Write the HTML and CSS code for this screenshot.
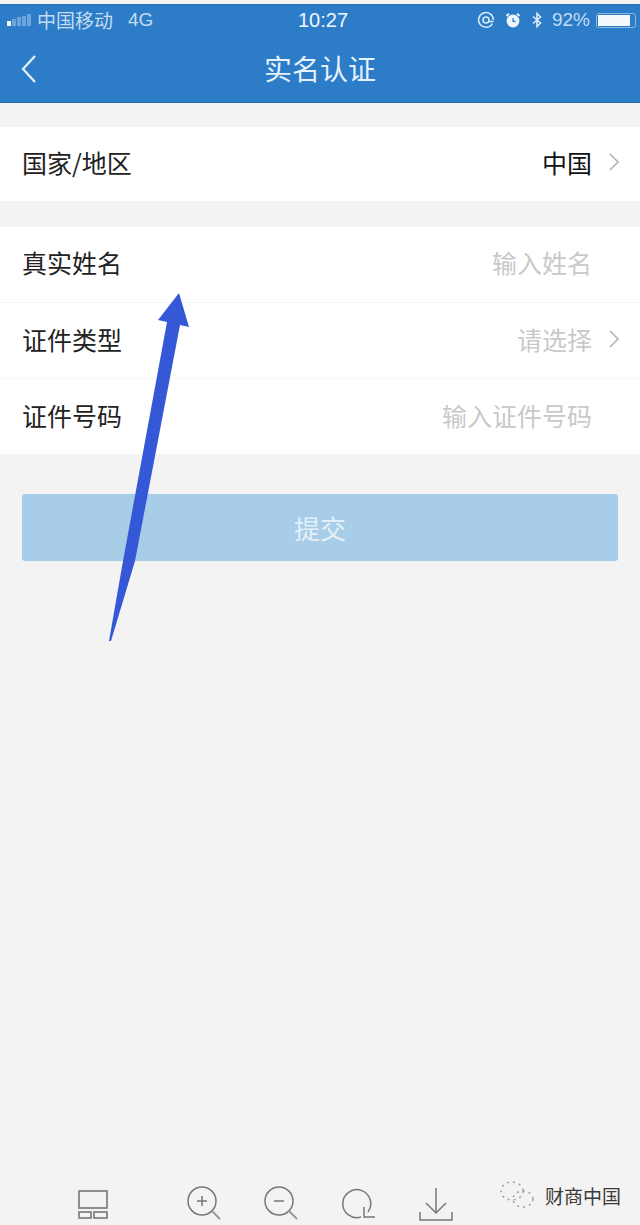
FILE: index.html
```html
<!DOCTYPE html>
<html lang="zh-CN">
<head>
    <meta charset="UTF-8">
    <meta name="viewport" content="width=device-width, initial-scale=1.0">
    <title>实名认证</title>
    <link rel="stylesheet" href="styles.css">
</head>
<body>
    <div class="page">
        <header class="header">
            <div class="status-bar">
                <div class="status-left">
                    <span class="signal"><i class="on"></i><i></i><i></i><i></i><i></i></span>
                    <span class="carrier">中国移动</span>
                    <span class="net">4G</span>
                </div>
                <div class="status-time">10:27</div>
                <div class="status-right">
                    <svg class="st-icon" width="18" height="18" viewBox="0 0 18 18"><path d="M15.5 12.5A7.4 7.4 0 1 1 16.4 9" fill="none" stroke="#dcecf8" stroke-width="1.5"/><circle cx="9" cy="9" r="3" fill="none" stroke="#dcecf8" stroke-width="1.5"/><path d="M11.5 10.5h5" stroke="#dcecf8" stroke-width="1.6"/></svg>
                    <svg class="st-icon alarm" width="18" height="18" viewBox="0 0 18 18"><circle cx="9" cy="10" r="6.4" fill="#eef6fc"/><path d="M2.5 5 5 2.6M15.5 5 13 2.6" stroke="#eef6fc" stroke-width="2"/><path d="M9 7v3.4h2.6" fill="none" stroke="#2c7cc8" stroke-width="1.2"/></svg>
                    <svg class="st-icon bt" width="12" height="18" viewBox="0 0 12 18"><path d="M2 5.5 9.5 12 6 15.5v-13L9.5 6 2 12.5" fill="none" stroke="#dcecf8" stroke-width="1.6"/></svg>
                    <span class="percent">92%</span>
                    <span class="battery"><span class="battery-fill"></span></span>
                </div>
            </div>
            <div class="nav-bar">
                <svg class="back" width="18" height="30" viewBox="0 0 18 30"><path d="M15 2 3 15l12 13" fill="none" stroke="#e6f2fb" stroke-width="2.2"/></svg>
                <h1>实名认证</h1>
            </div>
        </header>

        <section class="group">
            <div class="row">
                <span class="label">国家/地区</span>
                <span class="value">中国</span>
                <svg class="chevron" width="12" height="20" viewBox="0 0 12 20"><path d="M2 2l8 8-8 8" fill="none" stroke="#b0b0b0" stroke-width="1.5"/></svg>
            </div>
        </section>

        <section class="group">
            <div class="row line">
                <span class="label">真实姓名</span>
                <span class="placeholder pad">输入姓名</span>
            </div>
            <div class="row line">
                <span class="label">证件类型</span>
                <span class="placeholder">请选择</span>
                <svg class="chevron" width="12" height="20" viewBox="0 0 12 20"><path d="M2 2l8 8-8 8" fill="none" stroke="#b0b0b0" stroke-width="1.5"/></svg>
            </div>
            <div class="row">
                <span class="label">证件号码</span>
                <span class="placeholder pad">输入证件号码</span>
            </div>
        </section>

        <button class="submit">提交</button>

        <div class="toolbar">
            <svg class="tool t-panel" width="30" height="29" viewBox="0 0 30 29"><g fill="none" stroke="#777" stroke-width="1.6"><rect x="1" y="1" width="28" height="17"/><rect x="1" y="22" width="12" height="6"/><rect x="16" y="22" width="13" height="6"/></g></svg>
            <svg class="tool t-zoom" width="36" height="36" viewBox="0 0 36 36"><g fill="none" stroke="#777" stroke-width="1.5"><circle cx="15" cy="15" r="14"/><path d="M25 25l8 8" stroke="#999" stroke-width="2"/><path d="M10 15h10M15 10v10"/></g></svg>
            <svg class="tool t-zoom" width="36" height="36" viewBox="0 0 36 36"><g fill="none" stroke="#777" stroke-width="1.5"><circle cx="15" cy="15" r="14"/><path d="M25 25l8 8" stroke="#999" stroke-width="2"/><path d="M10 15h10"/></g></svg>
            <svg class="tool t-rotate" width="36" height="36" viewBox="0 0 36 36"><g fill="none" stroke="#777" stroke-width="1.5"><path d="M19 31A14 14 0 1 1 26 26"/><path d="M22 21v10h11"/></g></svg>
            <svg class="tool t-save" width="36" height="36" viewBox="0 0 36 36"><g fill="none" stroke="#777" stroke-width="1.5"><path d="M17 2v25M7 17l10 10 10-10"/><path d="M1 26v8h32v-8"/></g></svg>
        </div>

        <svg class="arrow" width="90" height="360" viewBox="0 0 90 360"><path d="M79 3 89 37 80 35 35 271 11 351 9 351 23 271 67 32 58 30Z" fill="#3559d6"/></svg>

        <div class="watermark">
            <svg width="36" height="30" viewBox="0 0 36 30"><g fill="none" stroke="#9a9a9a" stroke-width="1.4" stroke-dasharray="2 4"><ellipse cx="13" cy="11" rx="11" ry="9"/><ellipse cx="24" cy="19" rx="10" ry="8"/></g></svg>
            <span>财商中国</span>
        </div>
    </div>
</body>
</html>
```

FILE: styles.css
```css
html, body {
    margin: 0;
    padding: 0;
}

body {
    font-family: "Noto Sans CJK SC", "Liberation Sans", sans-serif;
    background-color: #f3f3f3;
}

.page {
    position: relative;
    height: 1225px;
    overflow: hidden;
    display: flex;
    flex-direction: column;
}

.header {
    margin-top: 4px;
    height: 99px;
    background-color: #2c7cc8;
    color: #e6f2fb;
    box-sizing: border-box;
    border-top: 1px solid #2a73b8;
    border-bottom: 1px solid #2a6fb0;
    margin-bottom: 24px;
    flex-shrink: 0;
}

.status-bar {
    height: 30px;
    display: flex;
    align-items: center;
    justify-content: space-between;
    padding: 0 4px 0 7px;
    position: relative;
    font-size: 17px;
}

.status-left,
.status-right {
    display: flex;
    align-items: center;
}

.signal {
    display: flex;
    gap: 1px;
    align-items: flex-end;
    margin-right: 6px;
}

.signal i {
    display: block;
    width: 4px;
    height: 10px;
    background-color: #6ba4da;
}

.signal i:nth-child(1) {
    height: 5px;
}

.signal i:nth-child(2) {
    height: 7px;
}

.signal i:nth-child(3) {
    height: 9px;
}

.signal i:nth-child(5) {
    height: 12px;
}

.signal i.on {
    background-color: #f2f8fd;
}

.carrier {
    color: #c4dcf2;
    font-size: 19px;
    width: 76px;
    white-space: nowrap;
    position: relative;
    top: -1px;
}

.net {
    margin-left: 15px;
    color: #c4dcf2;
    font-family: "Liberation Sans", sans-serif;
    font-size: 19px;
}

.status-time {
    position: absolute;
    left: 298px;
    font-family: "Liberation Sans", sans-serif;
    font-size: 20px;
    color: #f0f7fc;
}

.st-icon {
    margin-right: 9px;
}

.st-icon.bt {
    margin-right: 9px;
}

.percent {
    font-family: "Liberation Sans", sans-serif;
    font-size: 19px;
    color: #c4dcf2;
    margin-right: 6px;
}

.battery {
    display: block;
    width: 40px;
    height: 15px;
    box-sizing: border-box;
    border: 1px solid #8fbbe3;
    border-radius: 3px;
    padding: 1px;
}

.battery-fill {
    display: block;
    width: 32px;
    height: 11px;
    background-color: #f4f9fd;
}

.nav-bar {
    height: 67px;
    display: flex;
    align-items: center;
    justify-content: center;
    position: relative;
}

.nav-bar h1 {
    margin: 0;
    font-size: 28px;
    font-weight: 400;
    color: #e6f2fb;
    line-height: 1;
    position: relative;
    top: -1px;
}

.back {
    position: absolute;
    left: 20px;
    top: 19px;
}

.group {
    background-color: #fff;
    margin-bottom: 26px;
    flex-shrink: 0;
}

.group + .group {
    margin-bottom: 40px;
}

.row {
    height: 75px;
    box-sizing: border-box;
    display: flex;
    align-items: center;
    padding: 0 20px 4px 22px;
}

.group:first-of-type .row {
    height: 74px;
}

.row.line {
    height: 76px;
    border-bottom: 1px solid #f6f6f6;
}

.row.line:first-child {
    padding-bottom: 6px;
}

.label {
    font-size: 25px;
    color: #222;
    flex: 1;
}

.value {
    font-size: 25px;
    color: #111;
}

.placeholder {
    font-size: 25px;
    color: #c9c9c9;
}

.placeholder.pad {
    margin-right: 28px;
}

.chevron {
    margin-left: 16px;
}

.submit {
    display: block;
    margin: 0 22px;
    width: 596px;
    height: 67px;
    flex-shrink: 0;
    padding: 0;
    border: none;
    border-radius: 3px;
    background-color: #a8cde8;
    color: #e4f0f8;
    font-family: inherit;
    font-size: 26px;
}

.toolbar {
    margin-top: auto;
    display: flex;
    align-items: flex-end;
    height: 38px;
    padding: 0 0 3px 78px;
    overflow: visible;
}

.tool {
    flex-shrink: 0;
}

.t-zoom {
    margin-right: 41px;
}

.t-panel {
    margin-right: 79px;
    margin-bottom: 3px;
}

.t-rotate {
    margin-left: 1px;
    margin-right: 41px;
}

.arrow {
    position: absolute;
    left: 100px;
    top: 290px;
}

.watermark {
    position: absolute;
    left: 499px;
    top: 1180px;
    display: flex;
    align-items: center;
    gap: 10px;
    color: #3a3a3a;
    font-size: 19px;
}
```
